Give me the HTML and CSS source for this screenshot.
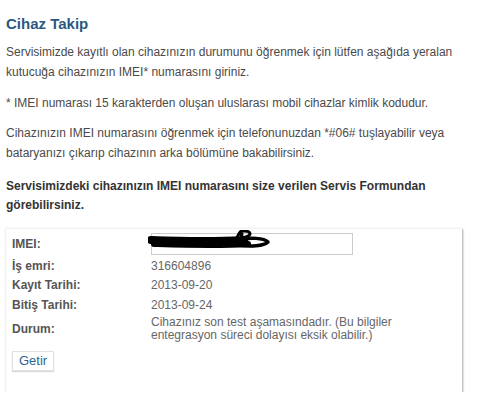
FILE: index.html
```html
<!DOCTYPE html>
<html lang="tr">
<head>
    <meta charset="UTF-8">
    <title>Cihaz Takip</title>
    <link rel="stylesheet" href="styles.css">
</head>
<body>
    <div class="page">
        <h2>Cihaz Takip</h2>

        <p>Servisimizde kayıtlı olan cihazınızın durumunu öğrenmek için lütfen aşağıda yeralan kutucuğa cihazınızın IMEI* numarasını giriniz.</p>
        <p>* IMEI numarası 15 karakterden oluşan uluslarası mobil cihazlar kimlik kodudur.</p>
        <p>Cihazınızın IMEI numarasını öğrenmek için telefonunuzdan *#06# tuşlayabilir veya bataryanızı çıkarıp cihazının arka bölümüne bakabilirsiniz.</p>
        <p class="note">Servisimizdeki cihazınızın IMEI numarasını size verilen Servis Formundan görebilirsiniz.</p>

        <div class="track-box">
            <div class="track-row imei-row">
                <span class="label">IMEI:</span>
                <div class="imei-field">
                    <input type="text" class="imei-input">
                    <!-- redaction scribble over the number -->
                    <svg class="scribble" width="125" height="22" viewBox="0 0 125 22">
                        <path d="M3 10 C30 11 60 12 96 10" fill="none" stroke="#000" stroke-width="8" stroke-linecap="round"/>
                        <path d="M6 14 C40 15 70 16 100 14" fill="none" stroke="#000" stroke-width="6" stroke-linecap="round"/>
                        <path d="M88 9 C92 4 90 1 96 1 C103 1 104 5 98 7 C95 8 92 6 94 4" fill="none" stroke="#000" stroke-width="3" stroke-linecap="round"/>
                        <path d="M90 10 C102 7 116 8 120 12 C116 16 102 17 90 15" fill="none" stroke="#000" stroke-width="3.5" stroke-linejoin="round"/>
                    </svg>
                </div>
            </div>
            <div class="track-row">
                <span class="label">İş emri:</span>
                <span class="value">316604896</span>
            </div>
            <div class="track-row">
                <span class="label">Kayıt Tarihi:</span>
                <span class="value">2013-09-20</span>
            </div>
            <div class="track-row">
                <span class="label">Bitiş Tarihi:</span>
                <span class="value">2013-09-24</span>
            </div>
            <div class="track-row status-row">
                <span class="label">Durum:</span>
                <span class="value">Cihazınız son test aşamasındadır. (Bu bilgiler entegrasyon süreci dolayısı eksik olabilir.)</span>
            </div>
            <div class="controls">
                <button>Getir</button>
            </div>
        </div>
    </div>
</body>
</html>
```

FILE: styles.css
```css
body {
    font-family: 'Liberation Sans', Arial, sans-serif;
    font-size: 12px;
    color: #4a4a4a;
    background-color: #fff;
    margin: 0;
    padding: 0;
}

.page {
    padding: 15px 6px 0 6px;
    width: 462px;
}

h2 {
    font-size: 15px;
    font-weight: bold;
    color: #2b5882;
    margin: 0 0 9px 0;
    line-height: 18px;
}

p {
    margin: 0 0 10.5px 0;
    line-height: 20px;
}

p.note {
    font-weight: bold;
    color: #333;
    line-height: 19px;
    margin-top: 14px;
    margin-bottom: 13px;
}

.track-box {
    margin-left: -1px;
    width: 444px;
    padding: 3px 6px 21px 6px;
    background-color: #fff;
    border-top: 1px solid #f2f2f2;
    border-left: 1px solid #f2f2f2;
    box-shadow: 1px 1px 2px rgba(0,0,0,0.35);
}

.track-row {
    display: grid;
    grid-template-columns: 139px 1fr;
    align-items: center;
    height: 19.5px;
}

.label {
    font-weight: bold;
    color: #555;
}

.value {
    color: #666;
}

.imei-row {
    height: 24px;
}

.imei-field {
    position: relative;
    width: 202px;
}

.imei-input {
    display: block;
    box-sizing: border-box;
    width: 202px;
    height: 22px;
    border: 1px solid #ccc;
    padding: 0 3px;
    margin: 0;
    background: #fff;
}

.scribble {
    position: absolute;
    left: -3px;
    top: -3px;
}

.status-row {
    height: 29px;
}

.status-row .value {
    max-width: 255px;
    line-height: 13px;
}

.controls {
    margin-top: 7px;
}

button {
    font-family: 'Liberation Sans', Arial, sans-serif;
    font-size: 13px;
    color: #2a6496;
    background-color: #fff;
    border: 1px solid #e2e2e2;
    box-shadow: 0 1px 1px rgba(0,0,0,0.15);
    padding: 0 6px;
    height: 20px;
    cursor: pointer;
}
```
